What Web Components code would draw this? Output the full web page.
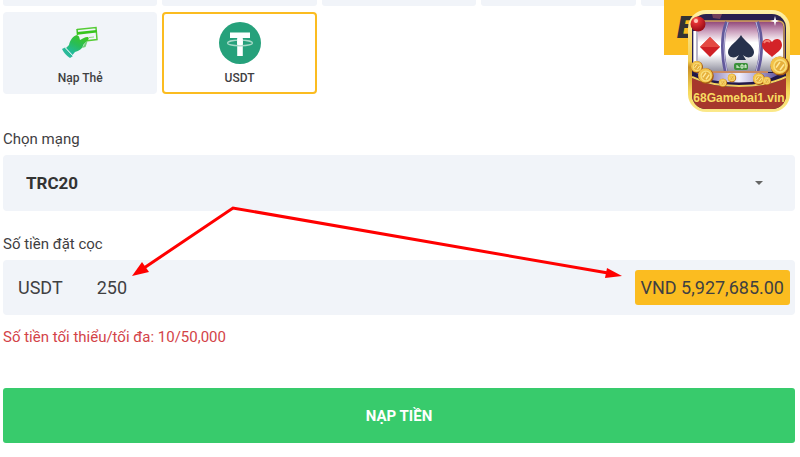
<!DOCTYPE html>
<html lang="vi">
<head>
    <meta charset="UTF-8">
    <meta name="viewport" content="width=device-width, initial-scale=1.0">
    <title>Nạp tiền USDT</title>
    <style>
        :root {
            --panel-color: #f1f4f9;
            --accent-color: #fbbc20;
            --success-color: #38cb6c;
            --error-color: #d34348;
            --text-color: #3f4042;
        }
        body {
            margin: 0;
            background-color: #fff;
            color: var(--text-color);
            font-family: Roboto, "Liberation Sans", sans-serif;
            font-size: 15px;
        }
    </style>
</head>
<body>
    <deposit-page></deposit-page>

    <template id="deposit-page">
        <style>
            :host {
                display: block;
                position: relative;
                padding: 0 5px 12px 3px;
                overflow: hidden;
            }
            .methods {
                display: grid;
                grid-template-columns: repeat(5, 1fr);
                gap: 6px 5px;
            }
            .previous {
                height: 6px;
                border-radius: 0 0 3px 3px;
                background-color: var(--panel-color);
            }
            form {
                display: flex;
                flex-direction: column;
                margin-top: 33px;
            }
            network-field {
                margin-bottom: 21px;
            }
            .limits {
                margin: 10px 0 39px;
                line-height: 24px;
                color: var(--error-color);
            }
            brand-badge {
                position: absolute;
                top: 0;
                right: 0;
            }
            hint-arrows {
                position: absolute;
                inset: 0 0 auto;
            }
        </style>
        <div class="methods">
            <div class="previous"></div>
            <div class="previous"></div>
            <div class="previous"></div>
            <div class="previous"></div>
            <div class="previous"></div>
            <method-tile>
                <svg slot="icon" width="36" height="42" viewBox="0 0 36 42">
                    <defs>
                        <linearGradient id="hand" x1="0.8" y1="0" x2="0.2" y2="1">
                            <stop offset="0" stop-color="#3fc71c"/>
                            <stop offset="0.5" stop-color="#29bd57"/>
                            <stop offset="1" stop-color="#20b9ad"/>
                        </linearGradient>
                    </defs>
                    <path d="M15 7.500 34 5.500 35 17.500 23 19" fill="none" stroke="#55cc35" stroke-width="1.500"/>
                    <path d="M15 7 15.500 13" stroke="#45c52e" stroke-width="1.500"/>
                    <path d="M15 10 34.500 8 34.800 10.500 15.300 12.800Z" fill="#38c41d"/>
                    <path d="M27 15.500 32 15" stroke="#8fdd7b"/>
                    <path d="M4 26 7 23C8 18 11 14 15 13L17 14.500 18 18C21 16 24 14.500 26 15C27.500 16 26.500 18 25 19L21.500 22.500C20.500 27 17 29 13 30L10.500 33Z" fill="url(#hand)"/>
                    <path d="M0 27 3 25.500 11 34 8 36Q3 33 0 27Z" fill="#2bb99a"/>
                    <path d="M3 25.500 11 34" stroke="#d9f3ec"/>
                    <path d="M20 26 23.500 20.500 25.500 19.500 23.500 25Z" fill="#6fce78"/>
                </svg>
                Nạp Thẻ
            </method-tile>
            <method-tile selected>
                <svg slot="icon" width="42" height="42" viewBox="0 0 42 42">
                    <circle cx="21" cy="21" r="21" fill="#26a17b"/>
                    <path d="M11 10.500H31V16H23.800V34H18.200V16H11Z" fill="#fff"/>
                    <ellipse cx="21" cy="21" rx="12.500" ry="2.800" fill="none" stroke="#a8dac8" stroke-width="1.300"/>
                    <path d="M18.200 17H23.800V22.500H18.200Z" fill="#fff"/>
                </svg>
                USDT
            </method-tile>
        </div>
        <form>
            <network-field></network-field>
            <amount-field></amount-field>
            <p class="limits">Số tiền tối thiểu/tối đa: 10/50,000</p>
            <submit-button>NẠP TIỀN</submit-button>
        </form>
        <brand-badge></brand-badge>
        <hint-arrows></hint-arrows>
    </template>

    <template id="method-tile">
        <style>
            :host {
                display: block;
            }
            button {
                display: flex;
                flex-direction: column;
                align-items: center;
                box-sizing: border-box;
                width: 100%;
                height: 82px;
                padding: 8px 0 0;
                gap: 4px;
                border: 2px solid var(--panel-color);
                border-radius: 4px;
                background-color: var(--panel-color);
                color: inherit;
                font: 500 12px/20px Roboto, "Liberation Sans", sans-serif;
                cursor: pointer;
            }
            :host([selected]) button {
                border-color: var(--accent-color);
                background-color: #fff;
            }
        </style>
        <button type="button">
            <slot name="icon"></slot>
            <span><slot></slot></span>
        </button>
    </template>

    <template id="network-field">
        <style>
            :host {
                display: block;
            }
            label {
                display: block;
                margin-bottom: 4px;
                line-height: 24px;
            }
            .control {
                display: grid;
                align-items: center;
            }
            select, svg {
                grid-area: 1 / 1;
            }
            select {
                appearance: none;
                width: 100%;
                height: 56px;
                padding: 0 48px 0 23px;
                border: none;
                border-radius: 4px;
                background-color: var(--panel-color);
                color: #333;
                font: 700 17px Roboto, "Liberation Sans", sans-serif;
            }
            svg {
                justify-self: end;
                margin-right: 32px;
                pointer-events: none;
            }
        </style>
        <label for="network">Chọn mạng</label>
        <div class="control">
            <select id="network">
                <option>TRC20</option>
            </select>
            <svg width="8" height="4" viewBox="0 0 8 4"><path d="M0 0H8L4 4Z" fill="#666"/></svg>
        </div>
    </template>

    <template id="amount-field">
        <style>
            :host {
                display: block;
            }
            label {
                display: block;
                margin-bottom: 4px;
                line-height: 24px;
            }
            .control {
                display: flex;
                align-items: center;
                box-sizing: border-box;
                height: 55px;
                padding: 0 5px 0 15px;
                border-radius: 4px;
                background-color: var(--panel-color);
                font-size: 18px;
            }
            input {
                flex: 1;
                min-width: 0;
                margin-left: 34px;
                padding: 0;
                border: none;
                outline: none;
                background: none;
                color: inherit;
                font: inherit;
            }
            output {
                padding: 0 6px;
                border-radius: 3px;
                background-color: var(--accent-color);
                line-height: 35px;
            }
        </style>
        <label for="amount">Số tiền đặt cọc</label>
        <div class="control">
            <span>USDT</span>
            <input id="amount" type="text" inputmode="numeric" value="250">
            <output for="amount">VND 5,927,685.00</output>
        </div>
    </template>

    <template id="submit-button">
        <style>
            :host {
                display: block;
            }
            button {
                width: 100%;
                height: 55px;
                border: none;
                border-radius: 3px;
                background-color: var(--success-color);
                color: #fff;
                font: 700 15px Roboto, "Liberation Sans", sans-serif;
                cursor: pointer;
            }
        </style>
        <button type="button"><slot></slot></button>
    </template>

    <template id="brand-badge">
        <style>
            :host {
                display: block;
                box-sizing: border-box;
                width: 136px;
                height: 55px;
                padding: 11px 13px;
                background-color: var(--accent-color);
            }
            .letter {
                color: #333;
                font: italic 900 32px/32px Roboto, "Liberation Sans", sans-serif;
            }
            svg {
                position: absolute;
                top: 10px;
                right: 10px;
            }
            text {
                font: 700 12px "Liberation Sans", sans-serif;
            }
        </style>
        <span class="letter">E</span>
        <svg width="102" height="102" viewBox="0 0 102 102">
            <defs>
                <linearGradient id="gold" x1="0" y1="0" x2="0" y2="1">
                    <stop offset="0" stop-color="#fff1a8"/>
                    <stop offset="0.500" stop-color="#f3cf56"/>
                    <stop offset="0.560" stop-color="#c98f20"/>
                    <stop offset="0.800" stop-color="#f7d95c"/>
                    <stop offset="1" stop-color="#fbe98c"/>
                </linearGradient>
                <linearGradient id="reel" x1="0" y1="0" x2="0" y2="1">
                    <stop offset="0" stop-color="#8d4275"/>
                    <stop offset="0.200" stop-color="#cba0bd"/>
                    <stop offset="0.420" stop-color="#fff"/>
                    <stop offset="0.650" stop-color="#fff"/>
                    <stop offset="1" stop-color="#8f8f9e"/>
                </linearGradient>
                <linearGradient id="ledge" x1="0" y1="0" x2="1" y2="0">
                    <stop offset="0" stop-color="#5b4d95"/>
                    <stop offset="0.500" stop-color="#f2f1ff"/>
                    <stop offset="1" stop-color="#504291"/>
                </linearGradient>
                <radialGradient id="knob" cx="0.350" cy="0.250" r="0.700">
                    <stop offset="0" stop-color="#ff9c90"/>
                    <stop offset="0.300" stop-color="#e33233"/>
                    <stop offset="1" stop-color="#a00e19"/>
                </radialGradient>
                <clipPath id="face"><rect x="4" y="4" width="94" height="95" rx="14"/></clipPath>
                <g id="coin">
                    <circle r="6" fill="#a95e12"/>
                    <circle cx="-0.500" cy="-0.500" r="5.500" fill="#f2c248"/>
                    <circle r="3.800" fill="#e6b03c" stroke="#f9df7c"/>
                    <path d="M-2.500 1 0-2.500M0 2.500 2.500-1" stroke="#ffe99a"/>
                </g>
            </defs>
            <rect width="102" height="102" rx="18" fill="url(#gold)"/>
            <g clip-path="url(#face)">
                <rect x="4" y="4" width="94" height="95" fill="#29204f"/>
                <path d="M24 4 34 4 32 9 25 8Z" fill="#71405a"/>
                <rect x="10" y="11" width="85" height="51" rx="5" fill="url(#reel)"/>
                <path d="M5 21H10V54H5Z" fill="#b9b6c9"/>
                <path d="M6 21H8V54H6Z" fill="#fff"/>
                <path d="M14 11H90Q96 11 96 17V62" fill="none" stroke="#d7a65b" stroke-width="1.500"/>
                <path d="M39 12Q35 22 35 36T38 62M69 12Q73 22 73 36T69 62" fill="none" stroke="#62599b" stroke-width="4"/>
                <path d="M40 12Q36 22 36 36T39 62M68 12Q72 22 72 36T68 62" fill="none" stroke="#bdb9dc"/>
                <path d="M4 62H98V81Q76 75 51 75T4 83Z" fill="#211848"/>
                <path d="M8 63H94L79 70Q51 75 23 70Z" fill="url(#ledge)"/>
                <path d="M24 62H80" stroke="#c98a62" stroke-width="2"/>
                <path d="M4 68Q22 77 51 77T98 68V99H4Z" fill="#a6372c"/>
                <path d="M4 67Q22 76 51 76T98 67" fill="none" stroke="#f3cf5e" stroke-width="2"/>
            </g>
            <path d="M22 27 32 37 22 47 12 37Z" fill="#cf2025"/>
            <path d="M22 27 32 37H12Z" fill="#e44a43"/>
            <path d="M53 25C56 31 66 36 66 42C66 48 59 49 55 45L58 50H48L51 45C47 49 40 48 40 42C40 36 50 31 53 25Z" fill="#26314c"/>
            <path d="M84 47C80 43 74 40 74 35C74 28 81 27 84 32C87 27 94 28 94 35C94 40 88 43 84 47Z" fill="#d42328"/>
            <path d="M76 33Q78 29 82 32" fill="none" stroke="#f28075" stroke-width="2"/>
            <rect x="46" y="53" width="14" height="7" rx="2" fill="#3b913b"/>
            <path d="M49 55V58M49 57H51V58M53 55H55V58H53ZM57 58V55H58V58" fill="none" stroke="#e7f5df"/>
            <circle cx="10" cy="14" r="7.500" fill="url(#knob)"/>
            <circle cx="8" cy="11" r="2" fill="#ffc6bb"/>
            <path d="M87 6 88 10 91 11 88 12 87 16 86 12 82 11 86 10Z" fill="#fff"/>
            <use href="#coin" transform="translate(9 57)"/>
            <use href="#coin" transform="translate(18 66) scale(1.300)"/>
            <use href="#coin" transform="translate(35 73) scale(0.700)"/>
            <use href="#coin" transform="translate(44 68) scale(0.700)"/>
            <use href="#coin" transform="translate(71 69)"/>
            <use href="#coin" transform="translate(79 71) scale(0.700)"/>
            <use href="#coin" transform="translate(92 56) scale(1.600)"/>
            <text x="51" y="92" text-anchor="middle" fill="#f8dc62">68Gamebai1.vin</text>
        </svg>
    </template>

    <template id="hint-arrows">
        <style>
            :host {
                display: block;
                pointer-events: none;
            }
            svg {
                display: block;
                width: 100%;
            }
        </style>
        <svg viewBox="0 0 800 457">
            <path d="M144 268 233 208 608 273" fill="none" stroke="#f00" stroke-width="3"/>
            <path d="M132 276 142 262 149 272Z" fill="#f00"/>
            <path d="M622 276 607 268 605 278Z" fill="#f00"/>
        </svg>
    </template>

    <script>
        const names = ['method-tile', 'network-field', 'amount-field', 'submit-button', 'brand-badge', 'hint-arrows', 'deposit-page'];

        names.forEach((name) => {
            const template = document.getElementById(name);
            window.customElements.define(name, class extends HTMLElement {
                constructor() {
                    super();
                    this.attachShadow({ mode: 'open' });
                    this.shadowRoot.appendChild(template.content.cloneNode(true));
                }
            });
        });
    </script>
</body>
</html>
